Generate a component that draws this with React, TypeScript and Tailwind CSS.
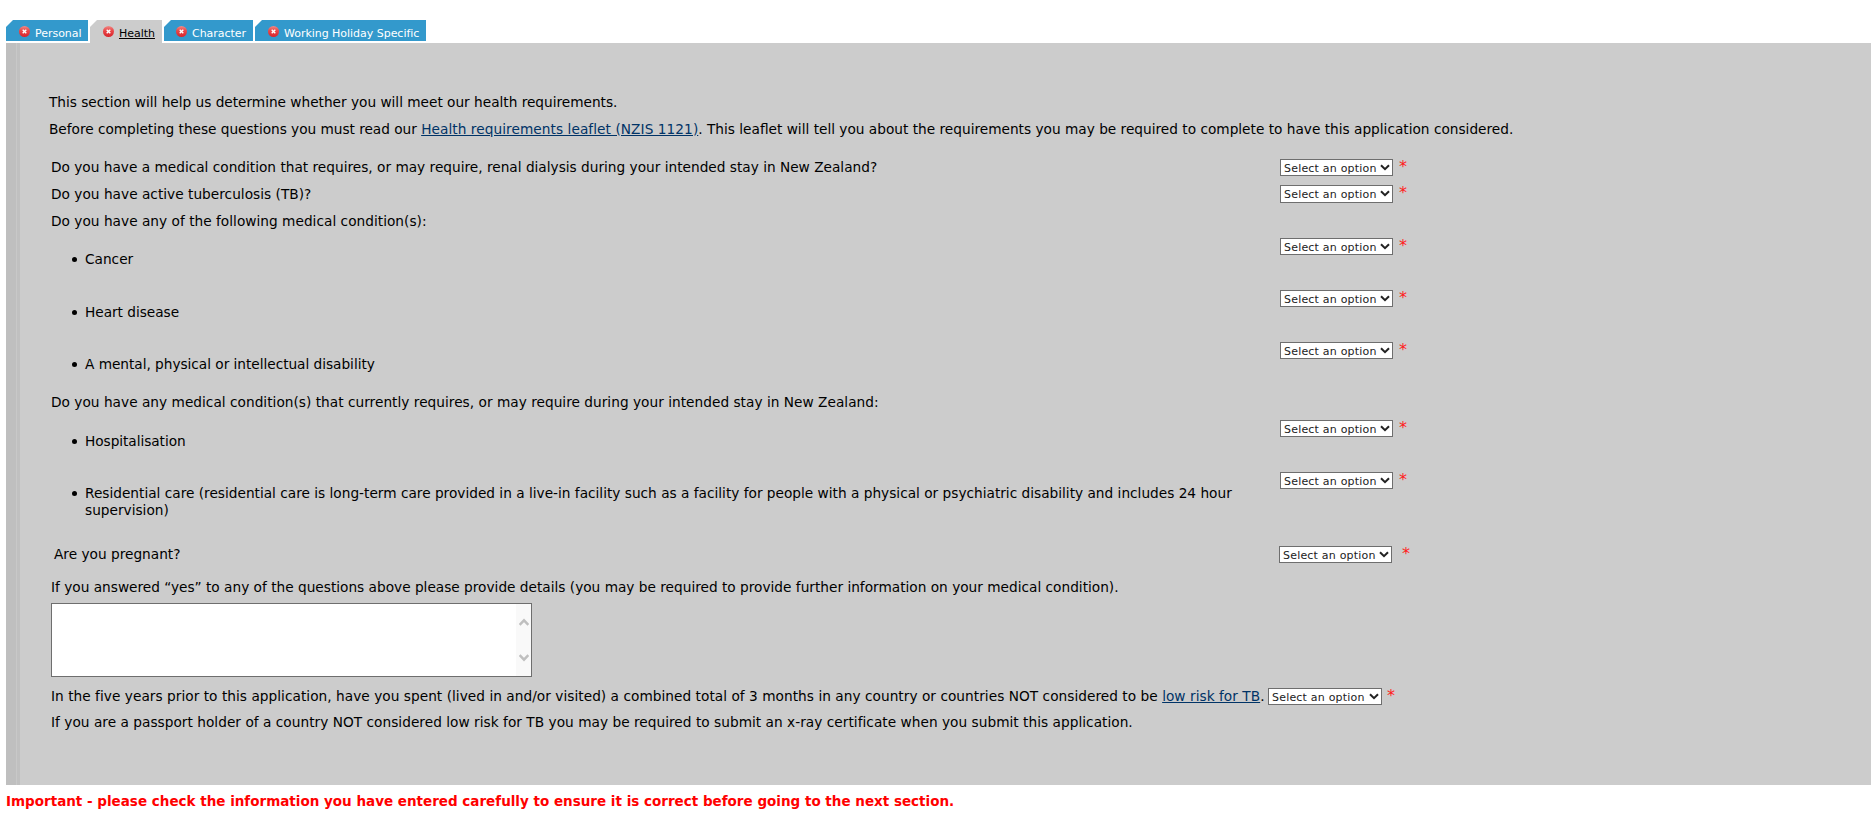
import type { ReactNode } from "react";
import clsx from "clsx";

const tabs = [
  { label: "Personal", width: "w-[82px]", icon: "ml-[13px]" },
  { label: "Health", width: "w-[72px]", icon: "ml-[13px]", active: true },
  { label: "Character", width: "w-[89px]", icon: "ml-3" },
  { label: "Working Holiday Specific", width: "w-[171px]", icon: "ml-[13px]" },
];

function ErrorIcon({ className }: { className?: string }) {
  return (
    <svg viewBox="0 0 11 11" className={clsx("w-[11px] h-[11px] shrink-0", className)}>
      <defs>
        <linearGradient id="ball" x1="0" y1="0" x2="0" y2="1">
          <stop offset="0" stopColor="#f08a86" />
          <stop offset="0.4" stopColor="#ea4a4b" />
          <stop offset="1" stopColor="#d8242c" />
        </linearGradient>
      </defs>
      <circle cx="5.5" cy="5.5" r="5.5" fill="url(#ball)" />
      <path d="M3.7 3.7l3.6 3.6M7.3 3.7L3.7 7.3" stroke="#fff" strokeWidth="1.4" />
    </svg>
  );
}

function OptionSelect({ size = "h-[17px] w-[113px]" }: { size?: string }) {
  return (
    <span className={clsx("relative block shrink-0", size)}>
      <select className="block h-full w-full appearance-none border border-[#6e6e6e] bg-white pl-[3px] pt-px text-[11px] leading-[15px] tracking-[0.2px] text-[#222]">
        <option>Select an option</option>
      </select>
      <svg viewBox="0 0 10 7" className="pointer-events-none absolute right-[3px] top-[5px] h-[7px] w-[10px]">
        <path d="M1 1.2l4 4 4-4" fill="none" stroke="#222" strokeWidth="2" />
      </svg>
    </span>
  );
}

function Star({ className }: { className?: string }) {
  return <span className={clsx("-mt-px text-[16px] leading-[17px] text-[#ff2020]", className)}>*</span>;
}

type RowProps = { height: string; pad?: string; children: ReactNode; select?: boolean; selectSize?: string };

function Row({ height, pad, children, select = true, selectSize }: RowProps) {
  return (
    <div className={clsx("flex items-start", height)}>
      <div className={clsx("w-[1229px] shrink-0", pad)}>{children}</div>
      {select && (
        <>
          <OptionSelect size={selectSize} />
          <Star className="ml-[6px]" />
        </>
      )}
    </div>
  );
}

function Bullet({ children }: { children: ReactNode }) {
  return (
    <div className="flex pl-[21px]">
      <span className="mr-2 mt-[6px] h-[5px] w-[5px] shrink-0 rounded-full bg-black" />
      <div>{children}</div>
    </div>
  );
}

export default function App() {
  return (
    <div className="h-[819px] w-[1875px] overflow-hidden bg-white pl-[6px] pt-5 font-['DejaVu_Sans',Verdana,sans-serif] text-[13.7px] leading-[17px] text-black">
      <div className="flex h-[23px] items-start gap-[2px]">
        {tabs.map((tab) => (
          <div
            key={tab.label}
            className={clsx(
              "flex shrink-0 [clip-path:polygon(7px_0,100%_0,100%_100%,0_100%,0_7px)]",
              tab.width,
              tab.active ? "h-[23px] bg-[#ccc] text-black" : "h-[21px] bg-[#3399cc] text-white"
            )}
          >
            <ErrorIcon className={clsx("mt-[6px]", tab.icon)} />
            <span className={clsx("ml-[5px] mt-[6px] whitespace-nowrap text-[11px] leading-4 tracking-[-0.03px]", tab.active && "underline")}>
              {tab.label}
            </span>
          </div>
        ))}
      </div>

      <div className="flex h-[742px] w-[1865px] bg-[#ccc]">
        <div className="w-[10px] bg-[#bfbfbf]" />
        <div className="w-px bg-[#c8c8c8]" />
        <div className="w-[3px] bg-[#c0c0c0]" />

        <div className="pt-[51px] whitespace-nowrap">
          <p className="ml-[29px] h-[27px] tracking-[-0.015px]">
            This section will help us determine whether you will meet our health requirements.
          </p>
          <p className="ml-[29px] h-[38px]">
            <span className="tracking-[-0.03px]">Before completing these questions you must read our </span>
            <a className="tracking-[0.06px] text-[#003366] underline">Health requirements leaflet (NZIS 1121)</a>. This leaflet will tell
            you about the requirements you may be required to complete to have this application considered.
          </p>

          <div className="ml-[31px]">
            <Row height="h-[26px]">
              Do you have a medical condition that requires, or may require, renal dialysis during your intended stay in New Zealand?
            </Row>
            <Row height="h-[27px]" pad="pt-px tracking-[0.02px]" selectSize="h-[18px] w-[113px]">
              Do you have active tuberculosis (TB)?
            </Row>
            <Row height="h-[26px]" pad="pt-px tracking-[0.02px]" select={false}>
              Do you have any of the following medical condition(s):
            </Row>
            <Row height="h-[52px]" pad="pt-[13px]"><Bullet>Cancer</Bullet></Row>
            <Row height="h-[52px]" pad="pt-[14px] tracking-[-0.03px]"><Bullet>Heart disease</Bullet></Row>
            <Row height="h-[52px]" pad="pt-[14px] tracking-[-0.03px]"><Bullet>A mental, physical or intellectual disability</Bullet></Row>
            <Row height="h-[26px]" pad="tracking-[0.02px]" select={false}>
              Do you have any medical condition(s) that currently requires, or may require during your intended stay in New Zealand:
            </Row>
            <Row height="h-[52px]" pad="pt-[13px] tracking-[-0.05px]"><Bullet>Hospitalisation</Bullet></Row>
            <Row height="h-[74px]" pad="pt-[13px]">
              <Bullet>
                Residential care (residential care is long-term care provided in a live-in facility such as a facility for people with a
                physical or psychiatric disability and includes 24 hour
                <br />
                supervision)
              </Bullet>
            </Row>

            <div className="flex h-[33px] items-start">
              <div className="w-[1228px] pl-[3px]">Are you pregnant?</div>
              <OptionSelect />
              <Star className="ml-[10px]" />
            </div>

            <p className="h-6">
              If you answered “yes” to any of the questions above please provide details (you may be required to provide further
              information on your medical condition).
            </p>
            <div className="flex h-[74px] w-[481px] border border-[#6e6e6e] bg-white">
              <textarea className="grow resize-none outline-none" />
              <div className="flex w-[15px] flex-col items-center justify-between bg-[#f9f9f9] py-[14px]">
                <svg viewBox="0 0 10 8" className="h-2 w-[10px]">
                  <path d="M0.7 6.8L5 2.3l4.3 4.5" fill="none" stroke="#bfbfbf" strokeWidth="2.4" />
                </svg>
                <svg viewBox="0 0 10 8" className="h-2 w-[10px]">
                  <path d="M0.7 1.2L5 5.7l4.3-4.5" fill="none" stroke="#bfbfbf" strokeWidth="2.4" />
                </svg>
              </div>
            </div>

            <div className="mt-[11px] flex h-[26px] items-start">
              <p className="w-[1217px] shrink-0 tracking-[0.035px]">
                In the five years prior to this application, have you spent (lived in and/or visited) a combined total of 3 months in
                any country or countries NOT considered to be <a className="text-[#003366] underline">low risk for TB</a>.
              </p>
              <OptionSelect size="h-[17px] w-[114px]" />
              <Star className="ml-[5px]" />
            </div>
            <p className="tracking-[0.027px]">
              If you are a passport holder of a country NOT considered low risk for TB you may be required to submit an x-ray
              certificate when you submit this application.
            </p>
          </div>
        </div>
      </div>

      <p className="mt-2 whitespace-nowrap text-[13.5px] font-bold text-[#ff0000]">
        Important - please check the information you have entered carefully to ensure it is correct before going to the next section.
      </p>
    </div>
  );
}
